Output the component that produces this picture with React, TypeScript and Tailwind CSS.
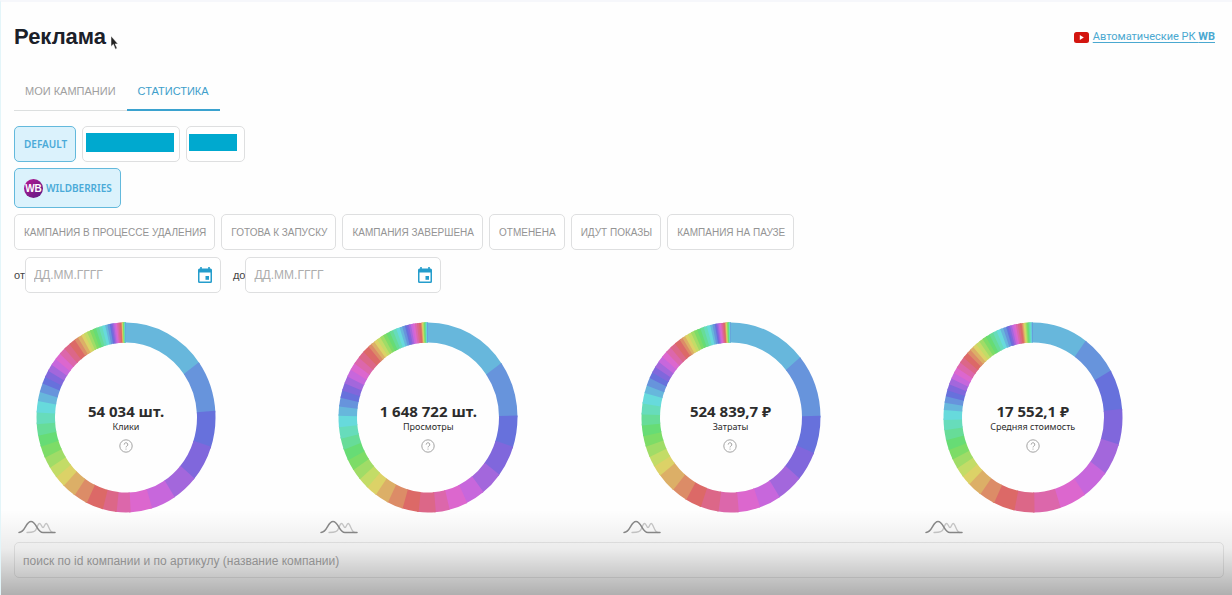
import { ReactNode } from "react";

const PALETTE = [
  "#67b7dc", "#6794dc", "#6771dc", "#8067dc", "#a367dc",
  "#c767dc", "#dc67ce", "#dc67ab", "#dc6788", "#dc6967",
  "#dc8c67", "#dcaf67", "#dcd267", "#c3dc67", "#a0dc67",
  "#7ddc67", "#67dc75", "#67dc98", "#67dcbb", "#67dadc",
];

type Anchor = [index: number, angle: number];

type Chart = { value: string; label: string; anchors: Anchor[] };

const CHARTS: Chart[] = [
  {
    value: "54 034 шт.",
    label: "Клики",
    anchors: [[0, 0], [1, 54.5], [2, 86], [3, 108], [4, 130], [5, 147], [6, 163], [7, 177], [8, 186], [9, 195], [10, 206], [11, 215], [12, 224], [20, 280], [21, 285.5], [22, 291], [30, 325], [32, 330], [40, 346.5], [42, 349.5], [50, 357], [60, 359.4], [62, 360]],
  },
  {
    value: "1 648 722 шт.",
    label: "Просмотры",
    anchors: [[0, 0], [1, 55], [2, 88.8], [3, 108], [4, 127], [5, 141.7], [6, 154], [7, 166], [8, 175], [9, 186], [10, 196.5], [11, 206.6], [12, 215.6], [20, 271], [21, 276.7], [22, 282], [30, 318.3], [32, 323], [40, 341.5], [42, 345], [50, 355.5], [60, 359.2], [62, 360]],
  },
  {
    value: "524 839,7 ₽",
    label: "Затраты",
    anchors: [[0, 0], [1, 50.6], [2, 89], [3, 112], [4, 130], [5, 147], [6, 161], [7, 175], [8, 188], [9, 199.7], [10, 210], [11, 220.3], [12, 232.3], [20, 285], [21, 289.7], [22, 294.5], [30, 325], [32, 329], [40, 346.5], [42, 349.5], [50, 356], [60, 359.3], [62, 360]],
  },
  {
    value: "17 552,1 ₽",
    label: "Средняя стоимость",
    anchors: [[0, 0], [1, 36], [2, 60.3], [3, 84.8], [4, 106.5], [5, 126], [6, 144.5], [7, 162], [8, 179], [9, 192], [10, 205.8], [11, 216], [12, 225.3], [20, 274.6], [21, 279], [22, 283], [30, 312.8], [32, 318], [40, 338.5], [42, 342.5], [50, 352.7], [60, 359], [62, 360]],
  },
];

const CAMPAIGN_STATES = [
  "Кампания в процессе удаления",
  "Готова к запуску",
  "Кампания завершена",
  "Отменена",
  "Идут показы",
  "Кампания на паузе",
];

function expand(anchors: Anchor[]): number[] {
  const out: number[] = [0];
  for (let i = 1; i < anchors.length; i++) {
    const [i0, a0] = anchors[i - 1];
    const [i1, a1] = anchors[i];
    for (let k = i0 + 1; k <= i1; k++) out.push(a0 + ((a1 - a0) * (k - i0)) / (i1 - i0));
  }
  return out;
}

function point(rx: number, ry: number, deg: number) {
  const t = (deg * Math.PI) / 180;
  return `${(90 + rx * Math.sin(t)).toFixed(2)} ${(95.5 - ry * Math.cos(t)).toFixed(2)}`;
}

function Donut({ value, label, anchors }: Chart) {
  const stops = expand(anchors);
  return (
    <figure className="flex flex-col">
      <div className="ml-[22px] grid h-[191px] w-[180px] place-items-center">
        <svg viewBox="0 0 180 191" className="col-start-1 row-start-1 h-[191px] w-[180px]" aria-hidden="true">
          {stops.slice(1).map((stop, i) => {
            const start = stops[i];
            // Each slice runs a little under the next one so no seam shows between them.
            const end = Math.min(stop + 1, 360);
            return (
              <path
                key={i}
                fill={PALETTE[i % PALETTE.length]}
                d={`M${point(89.5, 95, start)}A89.5 95 0 0 1 ${point(89.5, 95, end)}L${point(71, 75, end)}A71 75 0 0 0 ${point(71, 75, start)}Z`}
              />
            );
          })}
        </svg>
        <figcaption className="col-start-1 row-start-1 flex flex-col items-center pt-5 font-['Noto_Sans','Open_Sans',sans-serif] text-[#2c2c2c]">
          <span className="text-[15px] leading-[18px] font-bold whitespace-nowrap">{value}</span>
          <span className="text-[9px] leading-[14px] whitespace-nowrap">{label}</span>
          <button aria-label={`Справка: ${label}`} className="mt-[5px] text-[#a3a3a3]">
            <svg viewBox="0 0 14 14" className="size-[14px]" fill="none" stroke="currentColor">
              <circle cx="7" cy="7" r="6.2" />
              <path d="M5.2 5.6a1.8 1.8 0 1 1 2.7 1.5c-.6.4-.9.7-.9 1.3M7 9.6v1" />
            </svg>
          </button>
        </figcaption>
      </div>
      <svg viewBox="0 0 38 14" className="mt-[7px] ml-1 h-[14px] w-[38px]" fill="none" strokeLinecap="round" aria-hidden="true">
        <path d="M9 12.5c6 0 8.5-.5 10-5 1-3 1.700-4 2.600-4 1.800 0 2 4 3.400 4s1.500-4 3.200-4c2.300 0 2.800 9 6.800 9" stroke="#c9c9c9" strokeWidth="1.3" />
        <path d="M1 12.5c6.500 0 6.500-11 12-11s6 11 12 11h12" stroke="#8b8b8b" strokeWidth="1.5" />
      </svg>
    </figure>
  );
}

function Chip({ active = false, children }: { active?: boolean; children: ReactNode }) {
  return (
    <button
      aria-pressed={active}
      className={
        active
          ? "flex items-center gap-[3px] rounded-[5px] border border-[#63b9dc] bg-[#dbf2fc] pr-2 pl-[9px] font-['Noto_Sans',sans-serif] text-[10px] font-semibold text-[#4aaad8] uppercase"
          : "flex items-center rounded-[5px] border border-[#dedfe0] bg-white pr-2 pl-[9px] text-[10px] text-[#949494] uppercase"
      }
    >
      {children}
    </button>
  );
}

function DateField({ id, label }: { id: string; label: string }) {
  return (
    <div className="flex items-center">
      <label htmlFor={id} className="text-[11px] text-[#444]">{label}</label>
      <div className="flex h-9 w-[196px] items-center rounded-[5px] border border-[#dedfe0] bg-white px-2">
        <input id={id} placeholder="ДД.ММ.ГГГГ" className="min-w-0 flex-1 bg-transparent text-[12px] outline-none placeholder:text-[#adadad]" />
        <button aria-label="Открыть календарь">
          <svg viewBox="0 0 14 16" className="h-4 w-[14px]" fill="#259dcc" aria-hidden="true">
            <path fillRule="evenodd" d="M2.200 0h1.600v1.500h6.400V0h1.600v1.500h.7A1.500 1.500 0 0 1 14 3v11.500a1.500 1.500 0 0 1-1.500 1.500h-11A1.500 1.500 0 0 1 0 14.500V3a1.500 1.500 0 0 1 1.500-1.500h.7zM1.500 5.500v9h11v-9z" />
            <path d="M7.500 9H11v3.800H7.500z" />
          </svg>
        </button>
      </div>
    </div>
  );
}

export default function App() {
  return (
    <main className="relative min-h-screen border-t-2 border-l border-t-[#f6f7fb] border-l-[#e3f5f9] bg-[#fefefe] pr-2 pb-[17px] pl-[13px] font-['Liberation_Sans',Arial,sans-serif]">
      <header className="flex items-center justify-between pt-[19px] pr-[9px]">
        <h1 className="text-[22px] leading-8 font-bold text-[#1b2029]">Реклама</h1>
        <a href="#guide" className="flex items-center gap-1 font-['Roboto',sans-serif] text-[11px] text-[#4aa8d0]">
          <svg viewBox="0 0 15 11" className="h-[11px] w-[15px]" aria-hidden="true">
            <rect width="15" height="11" rx="2.5" fill="#d3150f" />
            <path d="M5.800 3v5l4-2.500z" fill="#fff" />
          </svg>
          <span className="underline underline-offset-2">Автоматические РК <b>WB</b></span>
        </a>
      </header>
      <svg viewBox="0 0 10 16" className="absolute top-[34px] left-[109px] h-[14px] w-[9px]" aria-hidden="true">
        <path d="M1 0v12l2.700-2.500L6 15l2-.900-2.300-5.100H9z" fill="#222" stroke="#fff" strokeWidth=".6" />
      </svg>

      <nav className="mt-[21px] flex text-[11px] leading-[35px] uppercase">
        <a href="#campaigns" className="border-b border-[#dcdfdf] px-[11px] text-[#a0a0a0]">Мои кампании</a>
        <a href="#stats" aria-current="page" className="border-b-2 border-[#3ba2cf] px-[11px] text-[#3f9fcb]">Статистика</a>
      </nav>

      <div className="mt-[15px] flex h-9 gap-[6px]">
        <Chip active>Default</Chip>
        <button aria-label="Кабинет 2" className="w-[98px] rounded-[5px] border border-[#dedfe0] bg-white pr-[5px] pb-1 pl-[3px]">
          <span className="block h-[19px] bg-[#00a9cf]" />
        </button>
        <button aria-label="Кабинет 3" className="w-[59px] rounded-[5px] border border-[#dedfe0] bg-white pr-[7px] pb-1 pl-[2px]">
          <span className="block h-[17px] bg-[#00a9cf]" />
        </button>
      </div>

      <div className="mt-[6px] flex h-10">
        <Chip active>
          <span className="flex size-[19px] items-center justify-center rounded-full bg-linear-to-br from-[#b8118f] to-[#5c1686] font-['Liberation_Sans',sans-serif] text-[10px] font-bold text-white">WB</span>
          Wildberries
        </Chip>
      </div>

      <div className="mt-[6px] flex h-9 gap-[6px]">
        {CAMPAIGN_STATES.map((s) => (
          <Chip key={s}>{s}</Chip>
        ))}
      </div>

      <div className="mt-[7px] flex gap-3">
        <DateField id="from" label="от" />
        <DateField id="to" label="до" />
      </div>

      <section className="mt-[29px] mr-px grid grid-cols-4">
        {CHARTS.map((c) => (
          <Donut key={c.label} {...c} />
        ))}
      </section>

      <input
        type="search"
        aria-label="Поиск"
        placeholder="поиск по id компании и по артикулу (название компании)"
        className="mt-2 block h-9 w-full rounded-[5px] border border-[#e9e9e9] bg-[#fefefe] px-2 pt-[2px] text-[12px] outline-none placeholder:text-[#a8a8a8]"
      />
      <div className="pointer-events-none absolute inset-x-0 bottom-0 h-[85px] bg-linear-to-b from-transparent via-black/7 via-45% to-black/31" />
    </main>
  );
}
